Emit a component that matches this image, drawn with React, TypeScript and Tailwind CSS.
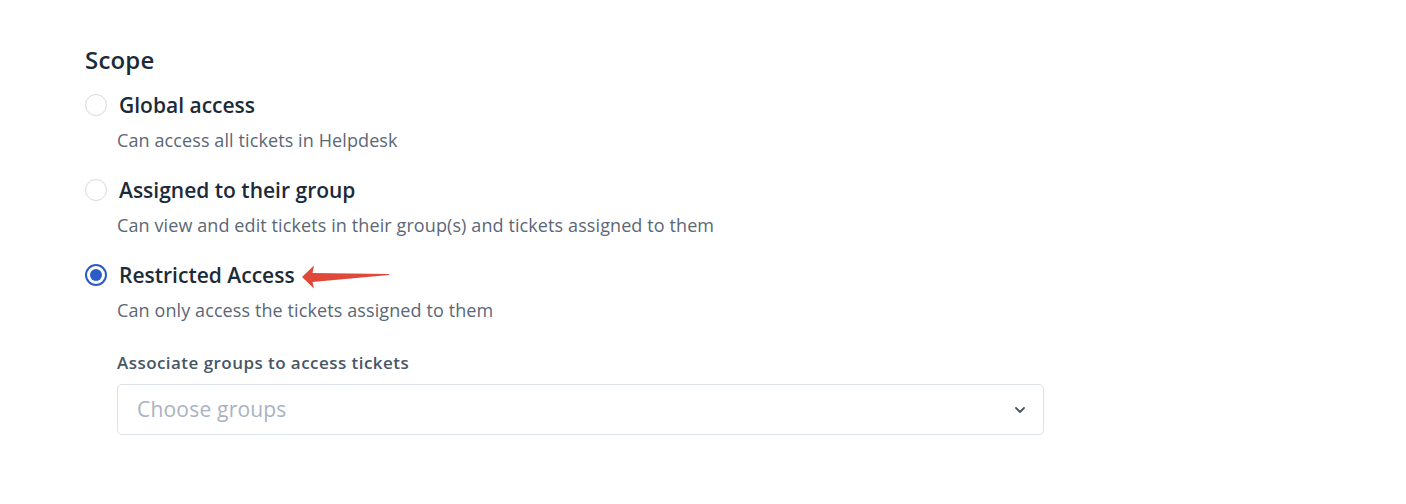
import React from "react";

function Radio({ checked }: { checked?: boolean }) {
  return checked ? (
    <span className="flex h-[22px] w-[22px] shrink-0 items-center justify-center rounded-full border-2 border-[#2c5cc5] bg-white">
      <span className="h-[12px] w-[12px] rounded-full bg-[#2c5cc5]" />
    </span>
  ) : (
    <span className="h-[22px] w-[22px] shrink-0 rounded-full border-[1.5px] border-[#d5dbe2] bg-white" />
  );
}

function Option({ title, desc, checked, arrow }: { title: string; desc: string; checked?: boolean; arrow?: boolean }) {
  return (
    <div className="flex flex-col">
      <div className="flex h-[30px] items-center">
        <div className="ml-[85px] flex items-center">
          <Radio checked={checked} />
        </div>
        <span className="ml-[12px] text-[21px] font-semibold leading-[30px] text-[#1c2b3a]">{title}</span>
        {arrow && (
          <svg className="ml-[6px] mt-[2px]" width="88" height="25" viewBox="0 0 88 25">
            <path d="M1 13 L13 1.5 L11.5 9 L88 10 L88 11 L11.5 18 L13 24.5 Z" fill="#e0483a" />
          </svg>
        )}
      </div>
      <div className="ml-[117px] mt-[8px] text-[18px] leading-[24px] tracking-[0.1px] text-[#5b6776]">{desc}</div>
    </div>
  );
}

export default function App() {
  return (
    <div className="h-[504px] w-[1406px] bg-white" style={{ fontFamily: '"Open Sans", "Noto Sans", sans-serif' }}>
      <div className="flex flex-col pt-[45px]">
        <div className="ml-[85px] text-[24px] font-semibold leading-[30px] tracking-[0.2px] text-[#1c2b3a]">Scope</div>
        <div className="mt-[15px] flex flex-col gap-[23px]">
          <Option title="Global access" desc="Can access all tickets in Helpdesk" />
          <Option title="Assigned to their group" desc="Can view and edit tickets in their group(s) and tickets assigned to them" />
          <Option title="Restricted Access" desc="Can only access the tickets assigned to them" checked arrow />
        </div>
        <div className="ml-[117px] mt-[30px] text-[17px] font-semibold leading-[22px] tracking-[0.45px] text-[#475766]">
          Associate groups to access tickets
        </div>
        <div className="ml-[117px] mt-[10px] flex h-[51px] w-[927px] items-center justify-between rounded-[5px] border border-[#dce2e8] bg-white pl-[19px] pr-[16px]">
          <span className="text-[21px] tracking-[0.2px] text-[#a9b3bf]">Choose groups</span>
          <svg width="14" height="14" viewBox="0 0 14 14" fill="none">
            <path d="M3 5 L7 9 L11 5" stroke="#475766" strokeWidth="1.8" strokeLinecap="round" strokeLinejoin="round" />
          </svg>
        </div>
      </div>
    </div>
  );
}
